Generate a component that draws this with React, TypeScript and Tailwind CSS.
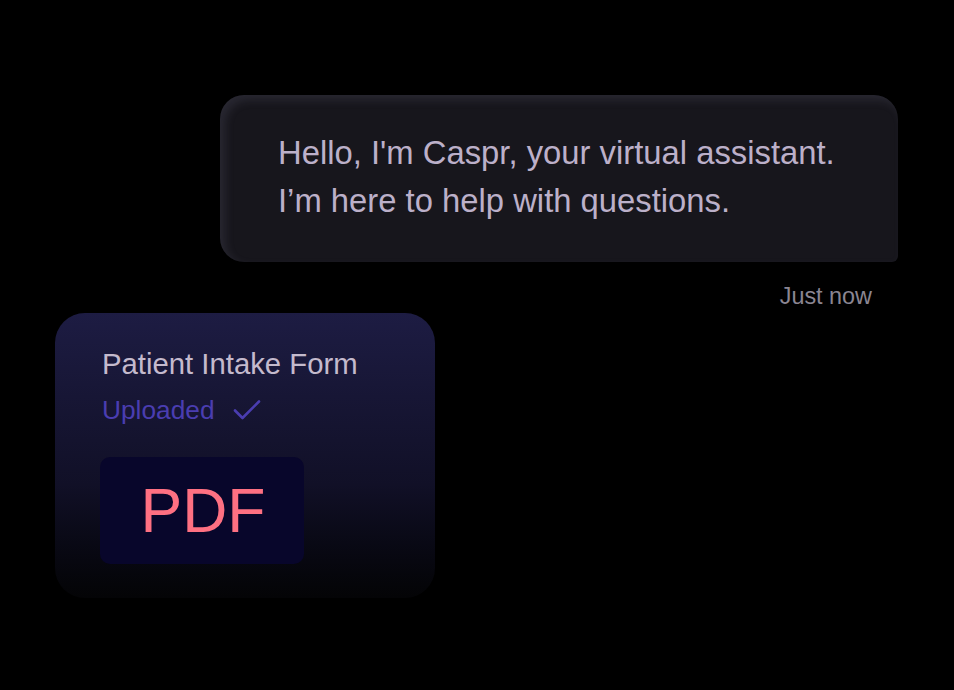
import React from 'react';

const CheckIcon = () => (
  <svg width="28" height="22" viewBox="0 0 28 22" fill="none">
    <path d="M2 11.5l7.5 7.5L26 2.5" stroke="#4a3db0" strokeWidth="2.6" strokeLinecap="round" strokeLinejoin="round" />
  </svg>
);

export default function App() {
  return (
    <div
      className="w-[954px] h-[690px] bg-black flex flex-col overflow-hidden"
      style={{ fontFamily: '"Liberation Sans", Arial, sans-serif' }}
    >
      {/* assistant message */}
      <div className="ml-[220px] mt-[95px] w-[678px] h-[167px] rounded-[24px] rounded-br-[6px] bg-[#17161c] shadow-[inset_5px_5px_10px_rgba(120,120,150,0.18)] pl-[58px] pt-[34px]">
        <p className="text-[32.8px] leading-[48px] text-[#bcb0c9]">
          Hello, I'm Caspr, your virtual assistant.
          <br />
          I’m here to help with questions.
        </p>
      </div>
      <div className="flex justify-end pr-[82px] mt-[20px]">
        <span className="text-[23.4px] leading-[28px] text-[#8a8592]">Just now</span>
      </div>

      {/* uploaded file card */}
      <div className="ml-[55px] mt-[3px] w-[380px] h-[285px] rounded-[30px] bg-gradient-to-b from-[#1d1c43] via-[#111027] via-60% to-[#040406] pl-[47px] pt-[34px]">
        <div className="text-[29.3px] leading-[34px] text-[#c4bacd]">Patient Intake Form</div>
        <div className="flex items-center gap-[18px] mt-[14px]">
          <span className="text-[26.3px] leading-[30px] text-[#4a3db0]">Uploaded</span>
          <CheckIcon />
        </div>
        <div className="mt-[32px] -ml-[2px] w-[204px] h-[107px] rounded-[10px] bg-[#08062b] flex items-center justify-center">
          <span className="text-[62.5px] leading-none text-[#fe7082] -mr-[2px]">PDF</span>
        </div>
      </div>
    </div>
  );
}
